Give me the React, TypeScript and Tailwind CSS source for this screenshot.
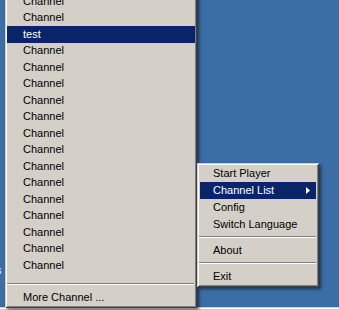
import React from "react";

const font = { fontFamily: '"Liberation Sans", Arial, sans-serif' };

const frame =
  "shadow-[inset_1px_1px_0_#d4d0c8,inset_-1px_-1px_0_#404040,inset_2px_2px_0_#ffffff,inset_-2px_-2px_0_#808080,2px_2px_3px_rgba(0,0,0,0.55)]";

function LeftItem({ label, active }: { label: string; active?: boolean }) {
  return (
    <div
      className={
        "h-[16.5px] flex items-center pl-[16px] text-[11px] leading-none " +
        (active ? "bg-[#0a246a] text-white" : "text-black")
      }
    >
      {label}
    </div>
  );
}

function PopItem({
  label,
  active,
  arrow,
}: {
  label: string;
  active?: boolean;
  arrow?: boolean;
}) {
  return (
    <div
      className={
        "h-[17px] flex items-center justify-between pl-[13px] pr-[6px] text-[11px] leading-none " +
        (active ? "bg-[#0a246a] text-white" : "text-black")
      }
    >
      <span>{label}</span>
      {arrow && (
        <svg width="4" height="7" viewBox="0 0 4 7">
          <path d="M0 0L4 3.5L0 7Z" fill="#ffffff" />
        </svg>
      )}
    </div>
  );
}

function Sep({ cls }: { cls: string }) {
  return (
    <div className={cls}>
      <div className="h-[1px] bg-[#808080]" />
      <div className="h-[1px] bg-white" />
    </div>
  );
}

export default function App() {
  const rows: { label: string; active?: boolean }[] = [
    { label: "Channel" },
    { label: "Channel" },
    { label: "test", active: true },
  ];
  for (let i = 0; i < 14; i++) rows.push({ label: "Channel" });

  return (
    <div
      className="w-[339px] h-[310px] relative overflow-hidden bg-[#3a6ea5] flex flex-col"
      style={font}
    >
      <div className="flex-1" />
      <div className="h-[3px] bg-[#d4d0c8] border-t border-t-[#d4d0c8]">
        <div className="h-[1px] bg-white" />
      </div>

      <span className="absolute left-[-4px] top-[262px] text-[11px] text-white">
        s
      </span>

      {/* Channel submenu */}
      <div
        className={
          "absolute left-[5px] top-[-9px] w-[192px] bg-[#d4d0c8] p-[2px] " +
          frame
        }
      >
        {rows.map((r, i) => (
          <LeftItem key={i} label={r.label} active={r.active} />
        ))}
        <Sep cls="h-[16px] flex flex-col justify-end pb-[5px] mr-[1px]" />
        <LeftItem label="More Channel ..." />
      </div>

      {/* Main tray menu */}
      <div
        className={
          "absolute left-[197px] top-[163px] w-[122px] bg-[#d4d0c8] px-[3px] py-[2px] " +
          frame
        }
      >
        <PopItem label="Start Player" />
        <PopItem label="Channel List" active arrow />
        <PopItem label="Config" />
        <PopItem label="Switch Language" />
        <Sep cls="h-[9px] flex flex-col pt-[3px] -ml-[1px]" />
        <PopItem label="About" />
        <Sep cls="h-[9px] flex flex-col pt-[3px] -ml-[1px]" />
        <PopItem label="Exit" />
      </div>
    </div>
  );
}
